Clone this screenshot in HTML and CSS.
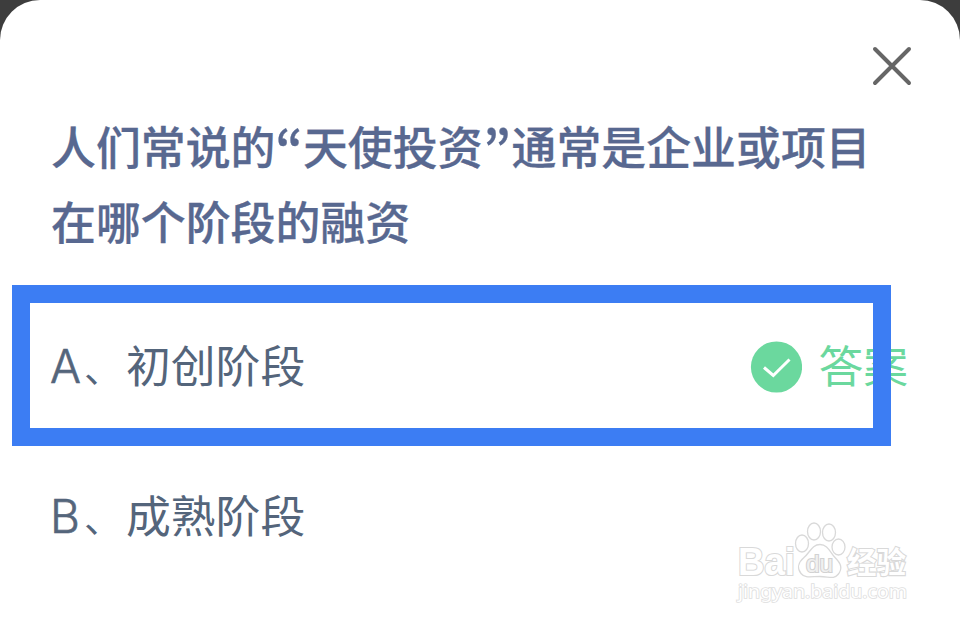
FILE: index.html
```
<!DOCTYPE html>
<html lang="zh-CN">
<head>
<meta charset="utf-8">
<title>答题</title>
<link rel="stylesheet" href="styles.css">
</head>
<body>
<main class="sheet">
  <header class="bar">
    <svg class="close" viewBox="0 0 40 40" aria-label="关闭"><path d="M3 3 37 37M37 3 3 37"/></svg>
  </header>
  <h1 class="question">人们常说的<span class="quote" lang="ko">“</span>天使投资<span class="quote quote-end" lang="ko">”</span>通常是企业或项目<br>在哪个阶段的融资</h1>
  <div class="option option-selected">
    <span class="letter">A</span><span class="comma">、</span><span class="label">初创阶段</span>
    <span class="answer">
      <svg class="tick" viewBox="0 0 52 52"><circle cx="26.500" cy="26" r="25.6"/><path d="M14 26.500 23.300 34.500 39.500 18.500"/></svg>
      <span>答案</span>
    </span>
  </div>
  <div class="option">
    <span class="letter">B</span><span class="comma">、</span><span class="label">成熟阶段</span>
  </div>
  <div class="highlight"></div>
  <svg class="watermark" viewBox="0 0 210 110">
    <g class="mark">
      <text class="brand" x="18" y="65" textLength="57" lengthAdjust="spacingAndGlyphs">Bai</text>
      <ellipse cx="82" cy="33.500" rx="6.500" ry="8.500"/>
      <ellipse cx="94" cy="21.500" rx="6.500" ry="8.500"/>
      <ellipse cx="109" cy="22.500" rx="6.500" ry="8.500"/>
      <ellipse cx="118.500" cy="37" rx="6.500" ry="8"/>
      <path d="M100 34.500c-8 0-10 8-16 13-6 5-7 11-3 16 4 5 10 3 19 3s14 3 18-2c5-6 3-11-3-17-5-5-7-13-15-13Z"/>
      <text class="du" x="86" y="61.500" textLength="27" lengthAdjust="spacingAndGlyphs">du</text>
      <text class="cjk" x="127" y="63" textLength="59" lengthAdjust="spacingAndGlyphs">经验</text>
      <text class="url" x="18" y="88" textLength="169" lengthAdjust="spacingAndGlyphs">jingyan.baidu.com</text>
    </g>
  </svg>
</main>
</body>
</html>
```
FILE: styles.css
```
* { box-sizing: border-box; }
body {
  margin: 0;
  background: #3d3d3d;
  font-family: "Noto Sans CJK SC", sans-serif;
}
.sheet {
  position: relative;
  height: 625px;
  padding: 46px 52px 0 51px;
  overflow: hidden;
  background: #fff;
  border-radius: 40px 40px 0 0;
}
.bar { display: flex; justify-content: flex-end; height: 62px; margin-right: -4px; }
.close { width: 40px; height: 40px; fill: none; stroke: #666; stroke-width: 4; stroke-linecap: round; }
.question {
  height: 150px;
  margin: 0;
  color: #586890;
  font-size: 44.9px;
  font-weight: 500;
  line-height: 75px;
  white-space: nowrap;
  -webkit-text-stroke: 0.3px #586890;
}
.quote {
  display: inline-flex;
  justify-content: center;
  width: 27.5px;
  font-family: "Noto Sans CJK KR", sans-serif;
  font-size: 54px;
  line-height: 0;
  position: relative;
  top: 5px;
}
.quote-end { width: 29px; }
.option {
  display: flex;
  align-items: center;
  height: 150px;
  color: #54657b;
  font-size: 44.8px;
  font-weight: 400;
  line-height: 66px;
  white-space: nowrap;
}
.option-selected { margin-top: 31px; }
.letter { width: 31px; padding-top: 3px; margin-left: -1px; font-family: "Inter", sans-serif; font-size: 46px; font-weight: 300; -webkit-text-stroke: 0.6px #54657b; }
.comma { width: 45px; padding: 4px 0 0 3px; font-size: 38px; }
.answer {
  display: flex;
  align-items: center;
  gap: 16px;
  margin-left: auto;
  color: #6bd89e;
}
.tick { position: relative; top: 3px; width: 52px; height: 52px; fill: #6bd89e; }
.tick path { fill: none; stroke: #fff; stroke-width: 3; }
.highlight {
  position: absolute;
  left: 12px;
  top: 285px;
  width: 879px;
  height: 161px;
  border: 18px solid #3c7df3;
}
.watermark { position: absolute; left: 720px; top: 510px; width: 210px; height: 110px; }
.mark { fill: #fff; stroke: #d9d9d9; stroke-width: 1.3; }
.mark text { paint-order: stroke; stroke-width: 2.2; }
.brand { font: bold 39px "Liberation Sans", sans-serif; }
.mark .du { font: 24px "Liberation Sans", sans-serif; fill: #f0f0f0; stroke: #d2d2d2; }
.cjk { font: bold 30px "Noto Sans CJK SC", sans-serif; }
.mark .url { font: 18px "Noto Sans", sans-serif; stroke: #dedede; stroke-width: 1.6; }
```
